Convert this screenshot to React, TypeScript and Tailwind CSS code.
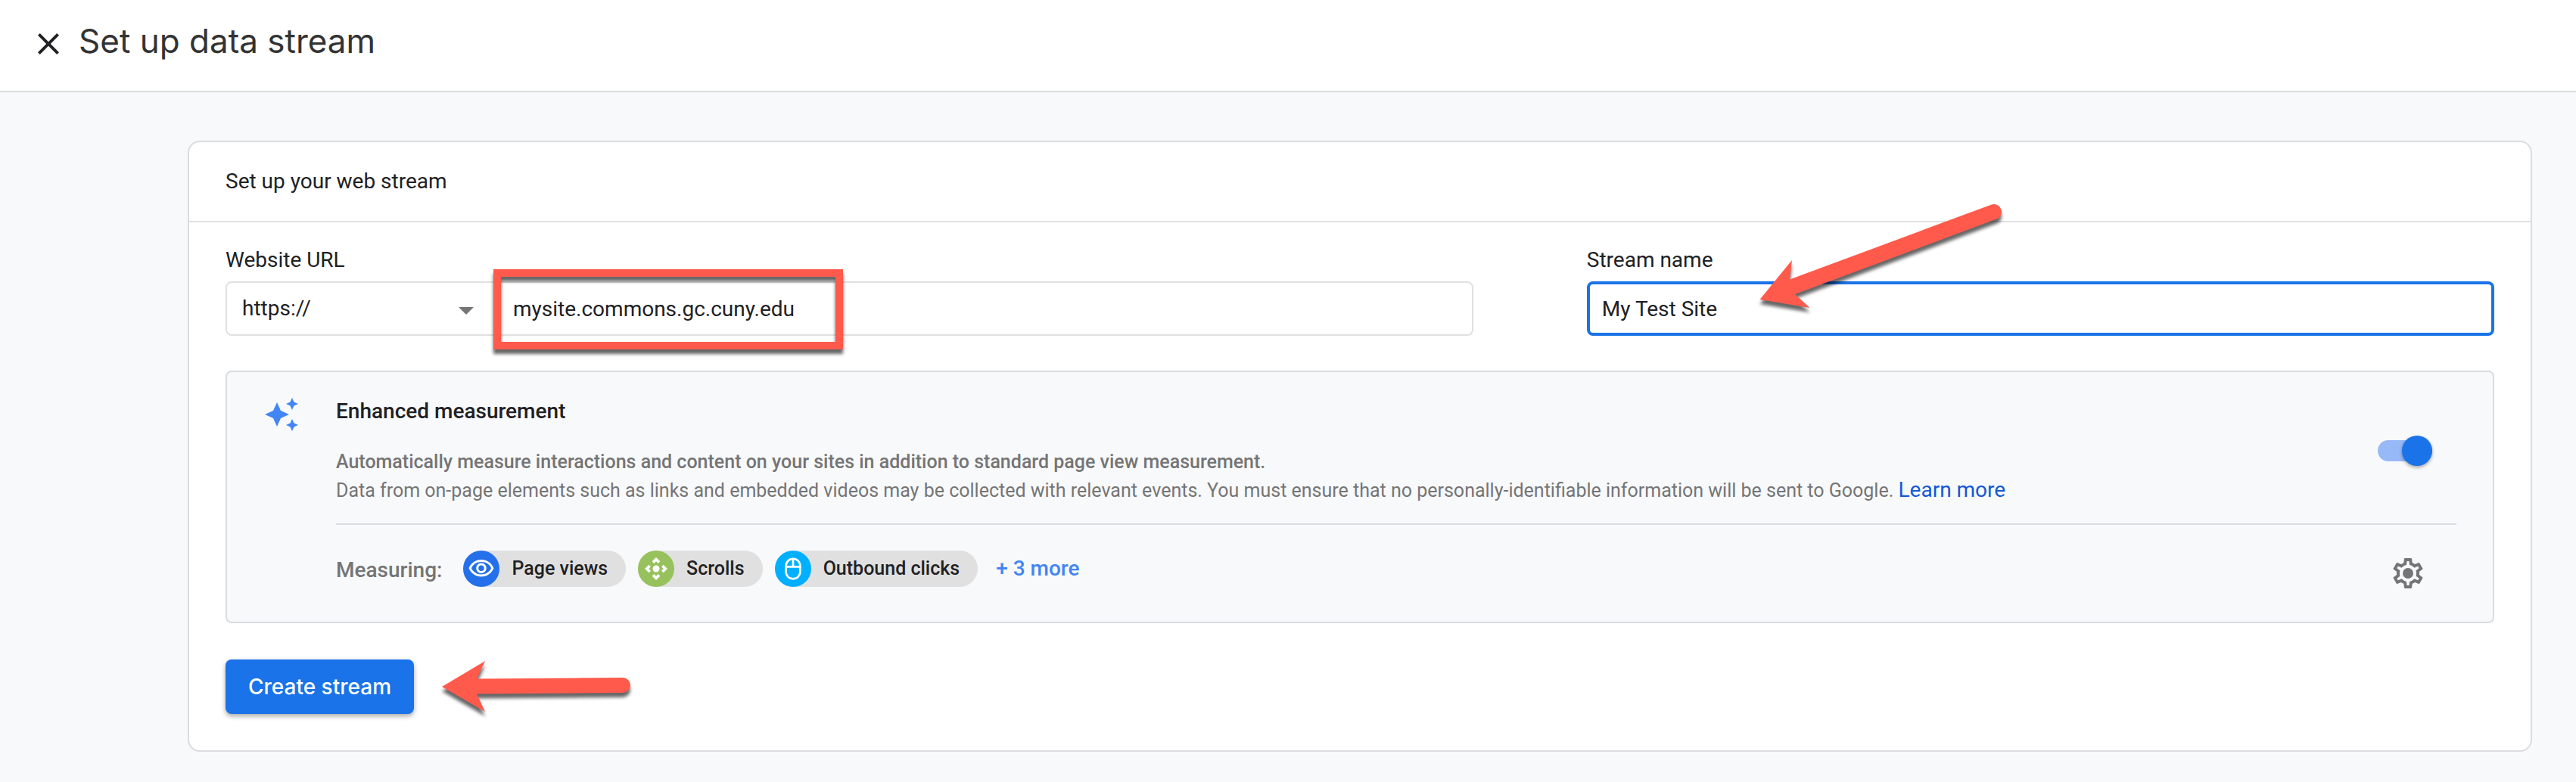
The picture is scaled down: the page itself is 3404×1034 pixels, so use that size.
import type { ReactNode } from "react";
import { MdClose, MdControlCamera, MdOutlineMouse, MdOutlineVisibility } from "react-icons/md";

function SparkleIcon() {
  return (
    <svg viewBox="0 0 44 44" className="mt-0.5 size-11 shrink-0 fill-[#4285f4]" aria-hidden="true">
      <path d="M16 6l5 11 11 5-11 5-5 11-5-11-11-5 11-5z" />
      <path d="M36 0l2.500 5.500L44 8l-5.500 2.500L36 16l-2.500-5.500L28 8l5.500-2.500z" />
      <path d="M36 28l2.500 5.500L44 36l-5.500 2.500L36 44l-2.500-5.500L28 36l5.500-2.500z" />
    </svg>
  );
}

function GearIcon() {
  return (
    <svg viewBox="0 0 24 24" className="size-12 fill-[#757575]" aria-hidden="true">
      <path d="M19.43 12.98c.04-.32.07-.64.07-.98 0-.34-.03-.66-.07-.98l2.110-1.650c.19-.15.24-.42.12-.64l-2-3.460c-.09-.16-.26-.25-.44-.25-.06 0-.12.01-.17.03l-2.490 1c-.52-.4-1.080-.73-1.690-.98l-.38-2.650C14.460 2.180 14.250 2 14 2h-4c-.25 0-.46.18-.49.42l-.38 2.650c-.61.25-1.170.59-1.690.98l-2.490-1c-.06-.02-.12-.03-.18-.03-.17 0-.34.09-.43.25l-2 3.460c-.13.22-.07.49.12.64l2.110 1.650c-.04.32-.07.65-.07.98 0 .33.03.66.07.98l-2.110 1.650c-.19.15-.24.42-.12.64l2 3.460c.09.16.26.25.44.25.06 0 .12-.01.17-.03l2.490-1c.52.4 1.080.73 1.690.98l.38 2.650c.03.24.24.42.49.42h4c.25 0 .46-.18.49-.42l.38-2.650c.61-.25 1.170-.59 1.690-.98l2.490 1c.06.02.12.03.18.03.17 0 .34-.09.43-.25l2-3.460c.12-.22.07-.49-.12-.64l-2.110-1.650zm-1.980-1.710c.04.31.05.52.05.73 0 .21-.02.43-.05.73l-.14 1.130.89.7 1.080.84-.7 1.210-1.270-.51-1.040-.42-.9.68c-.43.32-.84.56-1.250.73l-1.060.43-.16 1.130-.2 1.350h-1.400l-.19-1.350-.16-1.130-1.060-.43c-.43-.18-.83-.41-1.230-.71l-.91-.7-1.060.43-1.270.51-.7-1.210 1.080-.84.89-.7-.14-1.130c-.03-.31-.05-.54-.05-.74s.02-.43.05-.73l.14-1.130-.89-.7-1.080-.84.7-1.210 1.270.51 1.040.42.9-.68c.43-.32.84-.56 1.250-.73l1.060-.43.16-1.130.2-1.350h1.390l.19 1.350.16 1.130 1.060.43c.43.18.83.41 1.230.71l.91.7 1.060-.43 1.270-.51.7 1.210-1.070.85-.89.7.14 1.130z" />
      <circle cx="12" cy="12" r="3.500" />
    </svg>
  );
}

function Chip({ color, icon, children }: { color: string; icon: ReactNode; children: ReactNode }) {
  return (
    <li className="flex h-12 items-center gap-4 rounded-full bg-[#e0e0e0] pr-6 text-[25px] font-medium">
      <span className={`flex size-12 items-center justify-center rounded-full text-white ${color}`}>{icon}</span>
      {children}
    </li>
  );
}

export default function App() {
  return (
    <div className="flex min-h-screen flex-col bg-[#f8f9fb] font-['Roboto',sans-serif] text-[28px] text-[#202124]">
      <header className="flex items-start gap-4 border-b-2 border-[#dadce0] bg-white pt-[26px] pb-[38px] pl-10">
        <button type="button" aria-label="Close" className="mt-2">
          <MdClose className="size-12" />
        </button>
        <h1 className="font-['Inter',sans-serif] text-[44px] leading-[56px] text-[#333333]">Set up data stream</h1>
      </header>

      <main className="pt-16 pr-[58px] pb-10 pl-[248px]">
        <section className="rounded-2xl border-2 border-[#dadce0] bg-white">
          <h2 className="border-b-2 border-[#e0e0e0] px-12 py-8 leading-10">Set up your web stream</h2>

          <form className="px-12 pt-[30px] pb-12" onSubmit={(e) => e.preventDefault()}>
            <div className="flex justify-between">
              <div className="flex w-[55%] flex-col gap-2">
                <label htmlFor="site-url" className="leading-10">Website URL</label>
                <div className="flex h-[72px] rounded-lg border-2 border-[#e0e0e0]">
                  <div className="relative w-[352px] shrink-0">
                    <select aria-label="Protocol" className="size-full appearance-none pl-5 outline-none">
                      <option>https://</option>
                      <option>http://</option>
                    </select>
                    <svg viewBox="0 0 20 10" className="pointer-events-none absolute top-8 right-[26px] h-2.5 w-5 fill-[#757575]" aria-hidden="true">
                      <path d="M0 0h20L10 10z" />
                    </svg>
                  </div>
                  <div className="relative flex-1">
                    <input id="site-url" type="text" defaultValue="mysite.commons.gc.cuny.edu" className="size-full pl-[26px] outline-none" />
                    <div className="pointer-events-none absolute -top-[18px] left-0 h-[106px] w-[462px] border-10 border-[#ff5a4c] drop-shadow-[0_6px_2px_rgba(0,0,0,0.6)]" />
                  </div>
                </div>
              </div>

              <div className="relative flex w-[40%] flex-col gap-2">
                <label htmlFor="stream-name" className="leading-10">Stream name</label>
                <input id="stream-name" type="text" defaultValue="My Test Site" className="h-[72px] rounded-lg border-4 border-[#1a73e8] pl-4 outline-none" />
                <svg viewBox="0 0 340 180" className="pointer-events-none absolute -top-[74px] left-56 h-[180px] w-[340px] overflow-visible fill-[#ff5a4c] drop-shadow-[0_6px_2px_rgba(0,0,0,0.6)]" aria-hidden="true">
                  <path d="M4.500 146L47 94 44 119.500 310 20.700A10 10 0 0 1 317.500 39.600L51 139 70.500 157z" />
                </svg>
              </div>
            </div>

            <div className="mt-[46px] flex gap-[50px] rounded-lg border-2 border-[#dadce0] bg-[#f8f9fb] pt-8 pr-12 pb-[34px] pl-[50px]">
              <SparkleIcon />
              <div className="flex-1">
                <div className="flex items-center justify-between border-b-2 border-[#dadce0] pr-8 pb-6">
                  <div>
                    <h3 className="leading-10 font-medium">Enhanced measurement</h3>
                    <div className="mt-7 text-[25px] leading-[38px] text-[#757575]">
                      <p className="font-medium">Automatically measure interactions and content on your sites in addition to standard page view measurement.</p>
                      <p>
                        Data from on-page elements such as links and embedded videos may be collected with relevant events. You must ensure that no personally-identifiable information will be sent to Google.{" "}
                        <a href="#learn" className="text-[28px] leading-none text-[#1558d6]">Learn more</a>
                      </p>
                    </div>
                  </div>
                  <input
                    type="checkbox"
                    role="switch"
                    aria-label="Enhanced measurement"
                    defaultChecked
                    className="relative h-7 w-[72px] shrink-0 appearance-none rounded-full bg-[#98b9f8] before:absolute before:-top-1.5 before:right-0 before:size-10 before:rounded-full before:bg-[#1a73e8] before:shadow-[0_2px_4px_rgba(0,0,0,0.35)]"
                  />
                </div>

                <div className="flex items-start justify-between pt-[34px] pr-[34px]">
                  <div className="flex items-start gap-6">
                    <span className="mr-1 leading-[52px] font-medium text-[#757575]">Measuring:</span>
                    <ul className="flex gap-4">
                      <Chip color="bg-[#2370ea]" icon={<MdOutlineVisibility className="size-9" />}>Page views</Chip>
                      <Chip color="bg-[#97c15c]" icon={<MdControlCamera className="size-9" />}>Scrolls</Chip>
                      <Chip color="bg-[#00b0ff]" icon={<MdOutlineMouse className="size-8" />}>Outbound clicks</Chip>
                    </ul>
                    <button type="button" className="h-12 font-medium text-[#4285f4]">+ 3 more</button>
                  </div>
                  <button type="button" aria-label="Settings" className="flex size-[60px] items-center justify-center">
                    <GearIcon />
                  </button>
                </div>
              </div>
            </div>

            <div className="mt-12 flex items-center gap-8">
              <button type="submit" className="h-[72px] rounded-lg bg-[#1a73e8] px-[30px] font-['Inter',sans-serif] font-medium text-white shadow-[0_3px_6px_rgba(0,0,0,0.35)]">
                Create stream
              </button>
              <svg viewBox="0 0 264 80" className="-my-1 h-20 w-[264px] overflow-visible fill-[#ff5a4c] drop-shadow-[0_6px_2px_rgba(0,0,0,0.6)]" aria-hidden="true">
                <path d="M5 40L62 6 51 29.500 244 28A10 10 0 0 1 244 48L51 49.500 62 73z" />
              </svg>
            </div>
          </form>
        </section>
      </main>
    </div>
  );
}
